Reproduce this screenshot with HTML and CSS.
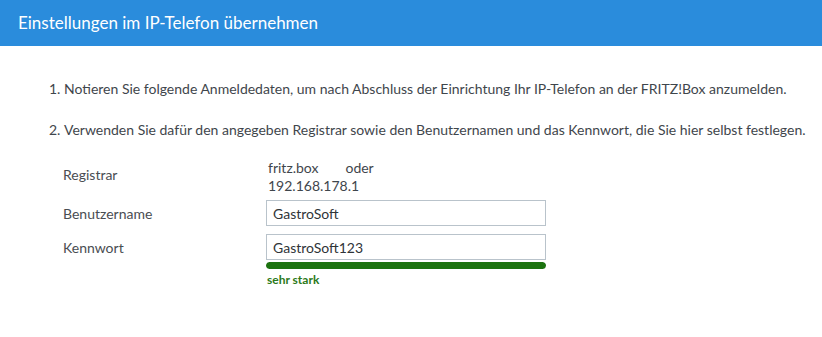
FILE: index.html
```html
<!DOCTYPE html>
<html lang="de">
<head>
  <meta charset="UTF-8">
  <title>Einstellungen im IP-Telefon übernehmen</title>
  <link rel="stylesheet" href="styles.css">
</head>
<body>
  <div class="page-title">Einstellungen im IP-Telefon übernehmen</div>

  <div class="content">
    <ol class="steps">
      <li>Notieren Sie folgende Anmeldedaten, um nach Abschluss der Einrichtung Ihr IP-Telefon an der FRITZ!Box anzumelden.</li>
      <li>Verwenden Sie dafür den angegeben Registrar sowie den Benutzernamen und das Kennwort, die Sie hier selbst festlegen.</li>
    </ol>

    <div class="form-grid">
      <div class="label label-tall">Registrar</div>
      <div class="registrar">
        <div class="registrar-line"><span>fritz.box</span><span>oder</span></div>
        <div>192.168.178.1</div>
      </div>

      <label class="label" for="username">Benutzername</label>
      <div><input id="username" type="text" value="GastroSoft"></div>

      <label class="label" for="password">Kennwort</label>
      <div>
        <input id="password" type="text" value="GastroSoft123">
        <div class="strength-bar"><div class="strength-fill" style="width: 100%;"></div></div>
        <div class="strength-text">sehr stark</div>
      </div>
    </div>
  </div>
</body>
</html>
```

FILE: styles.css
```css
/* Grundlayout */
body {
  font-family: 'Lato', 'Open Sans', sans-serif;
  font-size: 14px;
  color: #3f464c;
  background-color: #ffffff;
  margin: 0;
  padding: 0;
}

/* Kopfzeile */
.page-title {
  background-color: #2a8cdc;
  color: #ffffff;
  font-size: 17px;
  height: 46px;
  line-height: 46px;
  padding-left: 18px;
}

/* Inhalt */
.content {
  padding-top: 34px;
}

.steps {
  margin: 0;
  padding: 0 0 0 49px;
  list-style-position: inside;
}

.steps li {
  line-height: 18px;
  margin-bottom: 23px;
}

/* Formular */
.form-grid {
  display: grid;
  grid-template-columns: 203px 280px;
  row-gap: 8px;
  padding-left: 63px;
  margin-top: -4px;
}

.label {
  display: flex;
  align-items: center;
  color: #494d52;
  height: 26px;
  align-self: start;
}

.label-tall {
  height: 32px;
}

.registrar {
  line-height: 18px;
  padding-left: 2px;
  margin-top: 1px;
  margin-bottom: -3px;
}

.registrar-line {
  display: flex;
  gap: 27px;
}

input {
  width: 280px;
  height: 26px;
  box-sizing: border-box;
  border: 1px solid #b9c3cb;
  padding: 0 6px;
  font-family: inherit;
  font-size: 14px;
  color: #2f3438;
  margin: 0;
}

.strength-bar {
  margin-top: 2px;
  height: 7px;
  border-radius: 4px;
  background-color: #e0e0e0;
  overflow: hidden;
}

.strength-fill {
  height: 100%;
  background-color: #1c730f;
  border-radius: 4px;
}

.strength-text {
  color: #2c7a1a;
  font-size: 12px;
  font-weight: bold;
  margin-top: 3px;
  padding-left: 1px;
}
```
